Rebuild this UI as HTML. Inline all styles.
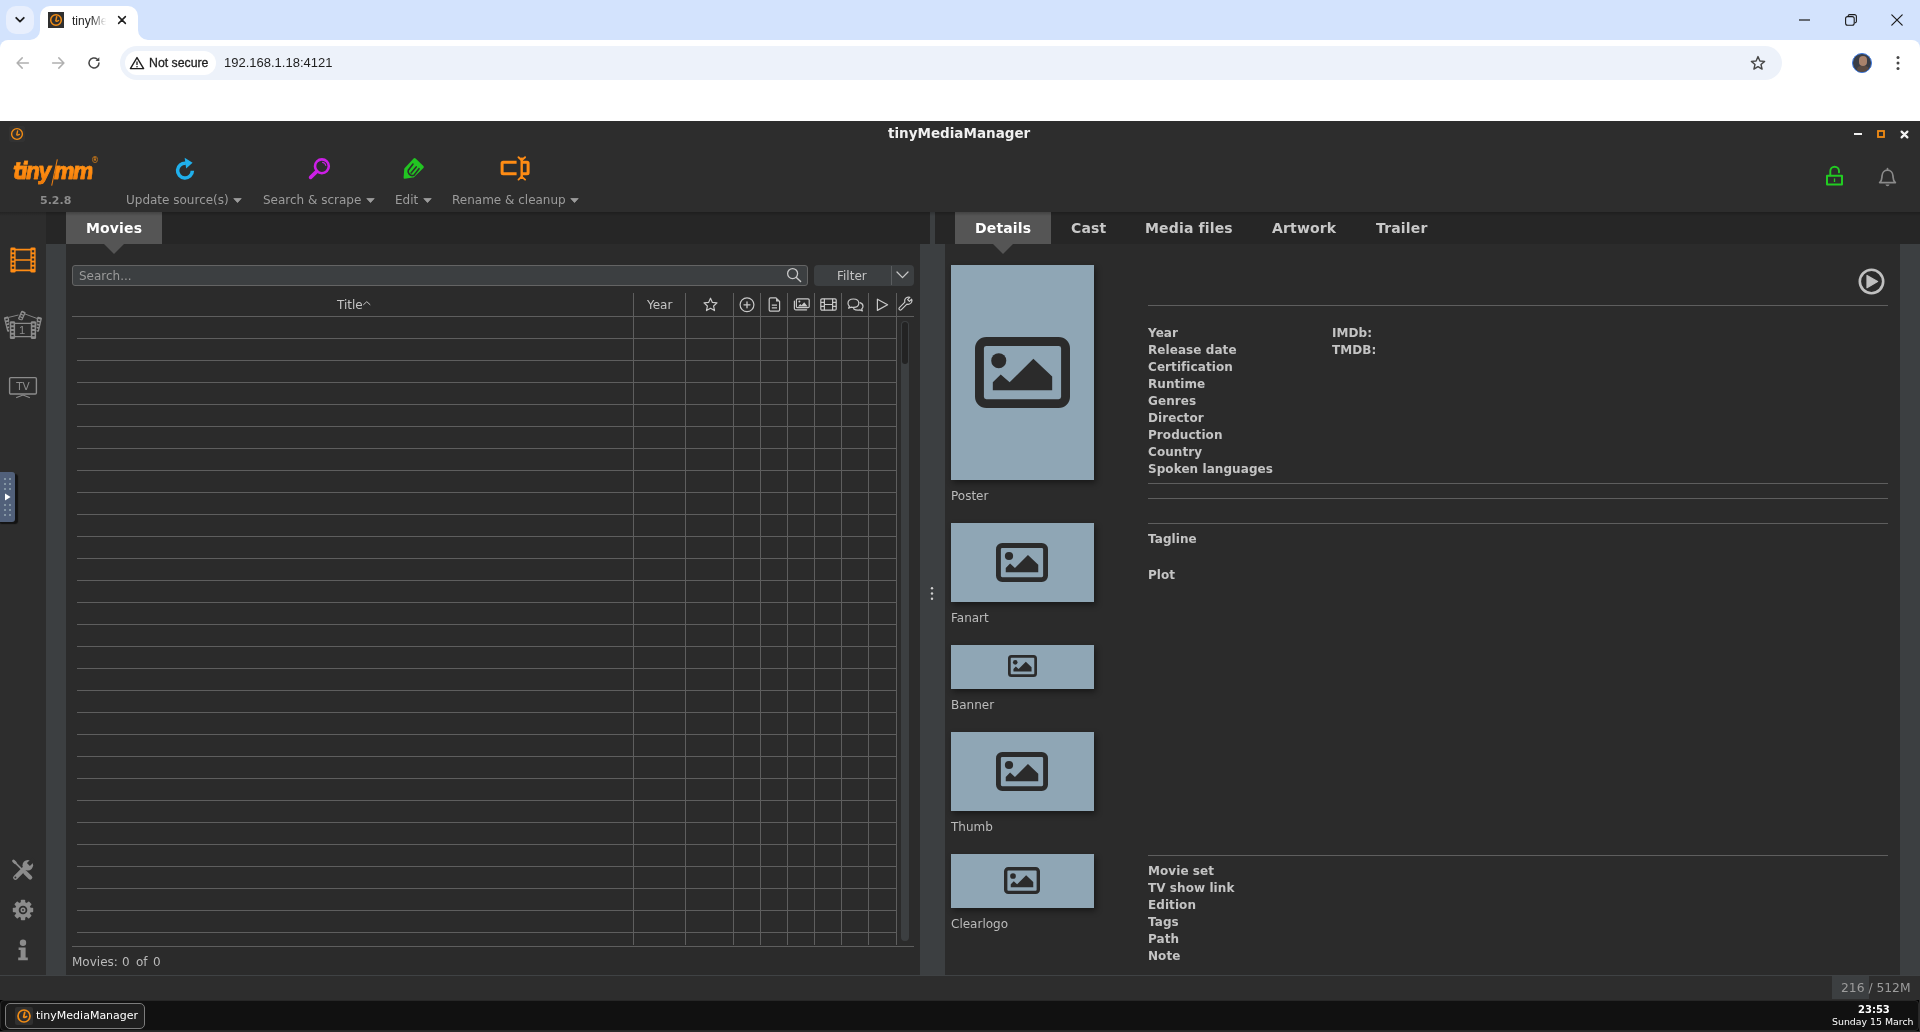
<!DOCTYPE html>
<html lang="en">
<head>
<meta charset="utf-8">
<title>tinyMediaManager</title>
<style>
*{box-sizing:border-box;margin:0;padding:0}
html,body{width:1920px;height:1032px;overflow:hidden;background:#2b2b2b}
body{position:relative;font-family:"DejaVu Sans","Liberation Sans",sans-serif;font-size:12px;color:#bbbbbb}
.abs{position:absolute}
svg{display:block;position:absolute;overflow:visible}
.t{position:absolute;white-space:pre;line-height:1}
/* ---------- browser chrome ---------- */
#tabstrip{left:0;top:0;width:1920px;height:60px;background:#d3e3fd}
#chrometool{left:0;top:40px;width:1920px;height:81px;background:#ffffff;border-radius:8px 8px 0 0}
#tabsearch{left:6px;top:6px;width:28px;height:28px;border-radius:10px;background:#e8effd}
#tab{left:40px;top:6px;width:98px;height:34px;background:#fff;border-radius:10px 10px 0 0}
#omni{left:120px;top:46px;width:1662px;height:34px;border-radius:17px;background:#edf2fa}
#chip{left:125px;top:51px;width:91px;height:24px;border-radius:12px;background:#fff}
.lib{font-family:"Liberation Sans",sans-serif}
/* ---------- app ---------- */
#apptop{left:0;top:121px;width:1920px;height:91px;background:#2d2d2d}
#tabrow{left:0;top:212px;width:1920px;height:32px;background:#262626}
#sidebar{left:0;top:212px;width:46px;height:763px;background:#2d2d2d}
#gapL{left:46px;top:244px;width:20px;height:731px;background:#3c3f41}
#gapM{left:920px;top:244px;width:25px;height:731px;background:#3c3f41}
#gapM2{left:930px;top:212px;width:5px;height:32px;background:#3c3f41}
#gapR{left:1900px;top:244px;width:20px;height:731px;background:#3c3f41}
#status{left:0;top:975px;width:1920px;height:25px;background:#2d2d2d;border-top:1px solid #3f4244}
#taskbarbg{left:0;top:1000px;width:1920px;height:32px;background:#000}
#taskbar{left:0;top:1000px;width:1919px;height:31px;background:#111111;border:1px solid #272727;border-radius:4px}
#tbr{left:1919px;top:1000px;width:1px;height:32px;background:#2b2b2b}
#tbb{left:0;top:1031px;width:1920px;height:1px;background:#2b2b2b}
.tabsel{background:#555555;height:32px;top:212px}
.tabtxt{font-weight:700;font-size:14px;color:#ffffff;letter-spacing:.14px}
.tabtxt2{font-weight:700;font-size:14px;color:#c8c8c8;letter-spacing:.16px}
.hl{position:absolute;height:1px;background:#5e5e5e}
.vl{position:absolute;width:1px;background:#5e5e5e}
.lbl{font-weight:700;font-size:12px;color:#c4c4c4;letter-spacing:.07px}
.art{position:absolute;left:951px;width:143px;background:#8fa6b5;box-shadow:2px 3px 6px rgba(0,0,0,.42)}
.tb{font-size:12px;color:#9c9c9c}
</style>
</head>
<body>
<div id="root" style="position:absolute;left:0;top:0;width:1920px;height:1032px;will-change:transform">
<!-- ======== browser chrome ======== -->
<div id="tabstrip" class="abs"></div>
<div id="chrometool" class="abs"></div>
<div id="tabsearch" class="abs"></div>
<div id="tab" class="abs"></div>
<div id="omni" class="abs"></div>
<div id="chip" class="abs"></div>
<!-- CHROME-DETAILS -->
<!-- tab flares -->
<svg style="left:30px;top:30px" width="10" height="10" viewBox="0 0 10 10"><path d="M10 0 V10 H0 A10 10 0 0 0 10 0Z" fill="#fff"/></svg>
<svg style="left:138px;top:30px" width="10" height="10" viewBox="0 0 10 10"><path d="M0 0 V10 H10 A10 10 0 0 1 0 0Z" fill="#fff"/></svg>
<!-- tab search chevron -->
<svg style="left:15px;top:16px" width="10" height="8" viewBox="0 0 10 8"><path d="M1.2 1.8 L5 5.6 L8.8 1.8" fill="none" stroke="#1f1f1f" stroke-width="1.8" stroke-linecap="round" stroke-linejoin="round"/></svg>
<!-- favicon -->
<div class="abs" style="left:48px;top:12px;width:16px;height:16px;background:#2f2f2f"></div>
<svg style="left:48px;top:12px" width="16" height="16" viewBox="0 0 16 16"><circle cx="8" cy="8" r="5.3" fill="none" stroke="#f28c14" stroke-width="1.5"/><path d="M8.7 4.7 L7.8 8.8 Q8.7 9.8 10.5 8.5" fill="none" stroke="#f28c14" stroke-width="1.5" stroke-linecap="round" stroke-linejoin="round"/></svg>
<div class="t lib" style="left:72px;top:14px;font-size:12px;line-height:14px;color:#1f1f1f;width:35px;overflow:hidden;-webkit-mask-image:linear-gradient(90deg,#000 55%,transparent 98%);mask-image:linear-gradient(90deg,#000 55%,transparent 98%)">tinyMediaManager</div>
<svg style="left:118px;top:16px" width="8" height="8" viewBox="0 0 8 8"><path d="M0.6 0.6 L7.4 7.4 M7.4 0.6 L0.6 7.4" stroke="#1f1f1f" stroke-width="1.5" stroke-linecap="round"/></svg>
<!-- window controls -->
<svg style="left:1799px;top:19px" width="11" height="2" viewBox="0 0 11 2"><rect width="11" height="1.2" y="0.4" fill="#1b1b1b"/></svg>
<svg style="left:1845px;top:14px" width="12" height="12" viewBox="0 0 12 12"><rect x="0.6" y="2.6" width="8.6" height="8.6" rx="2" fill="none" stroke="#1b1b1b" stroke-width="1.1"/><path d="M3 2.4 V2.2 A1.8 1.8 0 0 1 4.8 0.6 H9.4 A2 2 0 0 1 11.4 2.6 V7.2 A1.8 1.8 0 0 1 9.6 9" fill="none" stroke="#1b1b1b" stroke-width="1.1"/></svg>
<svg style="left:1891px;top:14px" width="12" height="12" viewBox="0 0 12 12"><path d="M0.8 0.8 L11.2 11.2 M11.2 0.8 L0.8 11.2" stroke="#1b1b1b" stroke-width="1.2" stroke-linecap="round"/></svg>
<!-- nav buttons -->
<svg style="left:16px;top:57px" width="13" height="12" viewBox="0 0 13 12"><path d="M6.2 0.9 L1.1 6 L6.2 11.1 M1.3 6 H12.4" fill="none" stroke="#b0b0b0" stroke-width="1.5" stroke-linecap="round" stroke-linejoin="round"/></svg>
<svg style="left:52px;top:57px" width="13" height="12" viewBox="0 0 13 12"><path d="M6.8 0.9 L11.9 6 L6.8 11.1 M11.7 6 H0.6" fill="none" stroke="#b0b0b0" stroke-width="1.5" stroke-linecap="round" stroke-linejoin="round"/></svg>
<svg style="left:87px;top:56px" width="14" height="14" viewBox="0 0 14 14"><path d="M12 7 A5 5 0 1 1 10.3 3.2" fill="none" stroke="#474747" stroke-width="1.5" stroke-linecap="round"/><path d="M12.3 1.2 V5 H8.5Z" fill="#474747"/></svg>
<!-- not secure chip -->
<svg style="left:129px;top:56px" width="16" height="14" viewBox="0 0 16 14"><path d="M8 1.6 L14.6 12.6 H1.4Z" fill="none" stroke="#1f1f1f" stroke-width="1.4" stroke-linejoin="round"/><path d="M8 5.6 V9" stroke="#1f1f1f" stroke-width="1.3"/><circle cx="8" cy="10.8" r="0.8" fill="#1f1f1f"/></svg>
<div class="t lib" style="left:149px;top:56px;font-size:12.3px;line-height:15px;color:#1f1f1f;-webkit-text-stroke:0.3px #1f1f1f">Not secure</div>
<div class="t lib" style="left:224px;top:55px;font-size:13px;line-height:16px;color:#1f1f1f">192.168.1.18:4121</div>
<!-- bookmark star -->
<svg style="left:1750px;top:55px" width="16" height="16" viewBox="0 0 16 16"><path d="M8 1.6 L9.9 6 L14.6 6.4 L11 9.5 L12.1 14.1 L8 11.6 L3.9 14.1 L5 9.5 L1.4 6.4 L6.1 6Z" fill="none" stroke="#474747" stroke-width="1.4" stroke-linejoin="round"/></svg>
<!-- avatar -->
<div class="abs" style="left:1852px;top:53px;width:20px;height:20px;border-radius:50%;background:#3a3d45;border:1px solid #3b78e0;overflow:hidden"><div class="abs" style="left:6px;top:2px;width:8px;height:10px;border-radius:4px;background:#a9826b"></div><div class="abs" style="left:4px;top:12px;width:12px;height:8px;border-radius:4px 4px 0 0;background:#5a4a42"></div></div>
<!-- menu dots -->
<svg style="left:1896px;top:55px" width="4" height="16" viewBox="0 0 4 16"><circle cx="2" cy="2.4" r="1.5" fill="#474747"/><circle cx="2" cy="8" r="1.5" fill="#474747"/><circle cx="2" cy="13.6" r="1.5" fill="#474747"/></svg>

<!-- ======== app ======== -->
<div id="apptop" class="abs"></div>
<div id="tabrow" class="abs"></div>
<div id="sidebar" class="abs"></div>
<div id="gapL" class="abs"></div>
<div id="gapM" class="abs"></div>
<div id="gapM2" class="abs"></div>
<div id="gapR" class="abs"></div>
<div id="status" class="abs"></div>
<div id="taskbarbg" class="abs"></div><div id="tbr" class="abs"></div><div id="tbb" class="abs"></div><div id="taskbar" class="abs"></div>
<!-- APP-TOP -->
<!-- title bar -->
<div class="abs" style="left:9px;top:126px;width:16px;height:16px;background:#323232;border-radius:2px"></div>
<svg style="left:9px;top:126px" width="16" height="16" viewBox="0 0 16 16"><circle cx="8" cy="8" r="5.4" fill="none" stroke="#f28c14" stroke-width="1.4"/><path d="M8.6 4.9 L7.8 8.7 Q8.6 9.6 10.3 8.4" fill="none" stroke="#f28c14" stroke-width="1.4" stroke-linecap="round" stroke-linejoin="round"/></svg>
<div class="t" style="left:888px;top:125px;font-size:13.5px;line-height:16px;font-weight:700;color:#f0f0f0">tinyMediaManager</div>
<svg style="left:1854px;top:133px" width="8" height="2" viewBox="0 0 8 2"><rect width="8" height="2" fill="#f0f0f0"/></svg>
<svg style="left:1877px;top:130px" width="8" height="8" viewBox="0 0 8 8"><rect x="1" y="1" width="6" height="6" fill="none" stroke="#f28c14" stroke-width="1.8"/></svg>
<svg style="left:1899.6px;top:129.6px" width="9" height="9" viewBox="0 0 9 9"><path d="M1.6 1.6 L7.4 7.4 M7.4 1.6 L1.6 7.4" stroke="#f4f4f4" stroke-width="2.2" stroke-linecap="round"/></svg>
<!-- logo -->
<div class="t" id="logo" style="left:13px;top:157px;font-family:'DejaVu Sans Condensed','DejaVu Sans',sans-serif;font-stretch:condensed;font-style:italic;font-weight:700;font-size:22.5px;line-height:28px;letter-spacing:-1.9px;color:#ff8c14;-webkit-text-stroke:0.45px #f78a12;background:linear-gradient(180deg,#ff9a1e 0%,#ff8a10 55%,#ea7608 100%);-webkit-background-clip:text;background-clip:text;-webkit-text-fill-color:transparent">tiny<span style="margin-left:4px">mm</span></div>
<div class="abs" style="left:54px;top:159px;width:1.2px;height:27px;background:#f08010;transform:rotate(12deg)"></div>
<div class="t" style="left:91px;top:156px;font-size:8px;line-height:9px;color:#f28c14">®</div>
<div class="t" style="left:40px;top:194px;font-size:11px;line-height:13px;font-weight:700;color:#8c8c8c">5.2.8</div>
<!-- toolbar icons -->
<svg style="left:173.6px;top:156.6px" width="23" height="24" viewBox="0 0 22 23"><path d="M17.6 13.2 A7.1 7.1 0 1 1 11.4 6" fill="none" stroke="#20b0ec" stroke-width="3.4"/><path d="M10.2 0.8 L17.8 5.4 L11.6 11Z" fill="#20b0ec"/></svg>
<svg style="left:308px;top:158px" width="22" height="22" viewBox="0 0 22 22"><circle cx="13.9" cy="8.3" r="6.9" fill="none" stroke="#cc1fe6" stroke-width="2.6"/><path d="M8.8 13.4 L2.6 19.4" stroke="#cc1fe6" stroke-width="3.6" stroke-linecap="round"/><path d="M14.6 4.4 A4 4 0 0 1 17.8 7.4" fill="none" stroke="#cc1fe6" stroke-width="1.1" stroke-linecap="round"/></svg>
<svg style="left:403px;top:157px" width="22" height="22" viewBox="0 0 22 22"><path d="M12.6 1.4 L20.4 9 Q21.4 10 20.4 11 L11.2 20 Q10.6 20.5 9.8 20.6 L1.8 21.7 Q0.4 21.8 0.6 20.4 L1.2 12.4 Q1.3 11.5 1.8 11 L10.6 1.4 Q11.6 0.5 12.6 1.4Z" fill="#22c522"/><path d="M10 7.1 L5.3 13.2 C4.2 15.6 7 19.6 10.9 18.3 L16 11.7 M8.1 16 L13.2 9.9" fill="none" stroke="#2d2d2d" stroke-width="1.6" stroke-linecap="round"/></svg>
<svg style="left:500px;top:156px" width="31" height="25" viewBox="0 0 31 25"><path d="M16.6 6.3 H3.1 Q2.1 6.3 2.1 7.3 V16.8 Q2.1 17.8 3.1 17.8 H16.6" fill="none" stroke="#ff8c14" stroke-width="3"/><path d="M21.2 6.3 H27.1 Q28.1 6.3 28.1 7.3 V16.8 Q28.1 17.8 27.1 17.8 H21.2" fill="none" stroke="#ff8c14" stroke-width="3"/><path d="M21.7 1.6 V23" stroke="#ff8c14" stroke-width="2.4"/><path d="M18.5 1.2 L21.7 4.2 L25.1 1.2 M18.5 23.6 L21.7 20.6 L25.1 23.6" fill="none" stroke="#ff8c14" stroke-width="1.9" stroke-linecap="round" stroke-linejoin="round"/></svg>
<!-- toolbar labels -->
<div class="t tb" style="left:126px;top:193px;line-height:14px">Update source(s)</div><svg style="left:233px;top:198px" width="9" height="5" viewBox="0 0 9 5"><path d="M0.8 0.5 H8.2 L4.5 4.6Z" fill="#9c9c9c" stroke="#9c9c9c" stroke-width="0.8" stroke-linejoin="round"/></svg>
<div class="t tb" style="left:263px;top:193px;line-height:14px">Search &amp; scrape</div><svg style="left:366px;top:198px" width="9" height="5" viewBox="0 0 9 5"><path d="M0.8 0.5 H8.2 L4.5 4.6Z" fill="#9c9c9c" stroke="#9c9c9c" stroke-width="0.8" stroke-linejoin="round"/></svg>
<div class="t tb" style="left:395px;top:193px;line-height:14px">Edit</div><svg style="left:423px;top:198px" width="9" height="5" viewBox="0 0 9 5"><path d="M0.8 0.5 H8.2 L4.5 4.6Z" fill="#9c9c9c" stroke="#9c9c9c" stroke-width="0.8" stroke-linejoin="round"/></svg>
<div class="t tb" style="left:452px;top:193px;line-height:14px">Rename &amp; cleanup</div><svg style="left:570px;top:198px" width="9" height="5" viewBox="0 0 9 5"><path d="M0.8 0.5 H8.2 L4.5 4.6Z" fill="#9c9c9c" stroke="#9c9c9c" stroke-width="0.8" stroke-linejoin="round"/></svg>
<div class="abs" style="left:0;top:212px;width:1920px;height:4px;background:linear-gradient(180deg,rgba(0,0,0,.22),rgba(0,0,0,0));z-index:5"></div>
<!-- lock + bell -->
<svg style="left:1825px;top:165px" width="19" height="22" viewBox="0 0 19 22"><rect x="2" y="10.7" width="15" height="8.8" fill="none" stroke="#22cc22" stroke-width="2" stroke-linejoin="round"/><path d="M5.3 10.4 V6.1 A4.35 4.35 0 0 1 14 6.1 V7.4" fill="none" stroke="#22cc22" stroke-width="1.9" stroke-linecap="round"/><path d="M9.5 13.4 V17" stroke="#22cc22" stroke-width="1.3"/></svg>
<svg style="left:1878px;top:167px" width="19" height="21" viewBox="0 0 19 21"><path d="M9.5 1.6 V3 M1.6 15.6 H17.4 C14.8 13.6 15.2 11.6 15 9 C14.8 5.4 12.4 3.2 9.5 3.2 C6.6 3.2 4.2 5.4 4 9 C3.8 11.6 4.2 13.6 1.6 15.6Z" fill="none" stroke="#8a8a8a" stroke-width="1.7" stroke-linejoin="round" stroke-linecap="round"/><path d="M7.4 17.6 A2.2 2.2 0 0 0 11.6 17.6Z" fill="#8a8a8a"/></svg>
<!-- tabs -->
<div class="abs tabsel" style="left:66px;width:96px"></div>
<div class="t tabtxt" style="left:86px;top:220px;line-height:17px">Movies</div>
<svg style="left:104px;top:244px" width="20" height="10" viewBox="0 0 20 10"><path d="M0 0 H20 L10 10Z" fill="#555555"/></svg>
<div class="abs tabsel" style="left:955px;width:96px"></div>
<div class="t tabtxt" style="left:975px;top:220px;line-height:17px">Details</div>
<svg style="left:993px;top:244px" width="20" height="10" viewBox="0 0 20 10"><path d="M0 0 H20 L10 10Z" fill="#555555"/></svg>
<div class="t tabtxt2" style="left:1071px;top:220px;line-height:17px">Cast</div>
<div class="t tabtxt2" style="left:1145px;top:220px;line-height:17px">Media files</div>
<div class="t tabtxt2" style="left:1272px;top:220px;line-height:17px">Artwork</div>
<div class="t tabtxt2" style="left:1376px;top:220px;line-height:17px">Trailer</div>

<!-- LEFT-PANEL -->
<div class="abs" style="left:72px;top:265px;width:736px;height:21px;background:#3c3f41;border:1px solid #646464;border-radius:3px"></div>
<div class="t" style="left:79px;top:269px;font-size:12px;line-height:15px;color:#9a9a9a">Search...</div>
<svg style="left:786px;top:267px" width="16" height="16" viewBox="0 0 16 16"><circle cx="6.6" cy="6.6" r="5" fill="none" stroke="#c8c8c8" stroke-width="1.3"/><path d="M10.4 10.4 L14.6 14.6" stroke="#c8c8c8" stroke-width="1.4" stroke-linecap="round"/></svg>
<div class="abs" style="left:814px;top:265px;width:100px;height:21px;background:#3c3f41;border-radius:4px"></div>
<div class="vl" style="left:891px;top:266px;height:19px;background:#5a5d5f"></div>
<div class="t" style="left:837px;top:269px;font-size:12px;line-height:15px;color:#c4c4c4">Filter</div>
<svg style="left:896px;top:271px" width="13" height="8" viewBox="0 0 13 8"><path d="M1 1 L6.5 6.6 L12 1" fill="none" stroke="#c8c8c8" stroke-width="1.3" stroke-linecap="round" stroke-linejoin="round"/></svg>
<!-- header -->
<div class="t" style="left:337px;top:298px;font-size:12px;line-height:15px;color:#c4c4c4">Title</div>
<svg style="left:363px;top:301px" width="8" height="4" viewBox="0 0 8 4"><path d="M0.6 3.6 L3.8 0.7 L7 3.6" fill="none" stroke="#c4c4c4" stroke-width="1" stroke-linecap="round" stroke-linejoin="round"/></svg>
<div class="t" style="left:647px;top:298px;font-size:12px;line-height:15px;color:#c4c4c4">Year</div>
<!-- HEADER-ICONS -->
<svg style="left:703px;top:297px" width="15" height="15" viewBox="0 0 15 15"><path d="M7.5 1.2 L9.4 5.4 L14 5.9 L10.6 9 L11.5 13.6 L7.5 11.3 L3.5 13.6 L4.4 9 L1 5.9 L5.6 5.4Z" fill="none" stroke="#c8c8c8" stroke-width="1.2" stroke-linejoin="round"/></svg>
<svg style="left:739px;top:297px" width="16" height="16" viewBox="0 0 16 16"><circle cx="8" cy="7.8" r="6.9" fill="none" stroke="#c8c8c8" stroke-width="1.2"/><path d="M8 4.8 V10.8 M5 7.8 H11" stroke="#c8c8c8" stroke-width="1.3" stroke-linecap="round"/></svg>
<svg style="left:768px;top:297px" width="13" height="15" viewBox="0 0 13 15"><path d="M2.6 0.8 H8 L11.6 4.4 V12.8 A1.4 1.4 0 0 1 10.2 14.2 H2.6 A1.4 1.4 0 0 1 1.2 12.8 V2.2 A1.4 1.4 0 0 1 2.6 0.8Z" fill="none" stroke="#c8c8c8" stroke-width="1.2" stroke-linejoin="round"/><path d="M8 0.8 V4.4 H11.6Z" fill="#c8c8c8"/><path d="M3.8 8.2 H9 M3.8 10.8 H9" stroke="#c8c8c8" stroke-width="1.2"/></svg>
<svg style="left:793px;top:298px" width="17" height="13" viewBox="0 0 17 13"><rect x="3.4" y="0.8" width="12.8" height="8.8" rx="1.2" fill="none" stroke="#c8c8c8" stroke-width="1.2"/><path d="M1.4 3 V10.4 A1.4 1.4 0 0 0 2.8 11.8 H13.6" fill="none" stroke="#c8c8c8" stroke-width="1.2" stroke-linecap="round"/><circle cx="6.4" cy="3.6" r="1" fill="#c8c8c8"/><path d="M5 8.4 L7.2 6 L8.6 7.2 L11.2 4.2 L14.6 8.4Z" fill="#c8c8c8"/></svg>
<svg style="left:820px;top:298px" width="17" height="13" viewBox="0 0 17 13"><rect x="0.8" y="0.8" width="15.4" height="11.4" rx="1.2" fill="none" stroke="#c8c8c8" stroke-width="1.2"/><path d="M4.4 0.8 V12.2 M12.6 0.8 V12.2 M4.4 6.5 H12.6 M0.8 4.4 H4.4 M0.8 8.4 H4.4 M12.6 4.4 H16.2 M12.6 8.4 H16.2" stroke="#c8c8c8" stroke-width="1.2"/></svg>
<svg style="left:847px;top:298px" width="17" height="14" viewBox="0 0 17 14"><path d="M6.4 1 C9.6 1 11.8 2.8 11.8 5.2 C11.8 7.6 9.6 9.4 6.4 9.4 C5.6 9.4 4.9 9.3 4.2 9.1 L1.6 10.2 L2.4 8.2 C1.5 7.4 1 6.4 1 5.2 C1 2.8 3.2 1 6.4 1Z" fill="none" stroke="#c8c8c8" stroke-width="1.2" stroke-linejoin="round"/><path d="M13 4.6 C14.8 5.2 16 6.6 16 8.2 C16 9.3 15.5 10.3 14.7 11 L15.4 13 L12.9 11.9 C12.2 12.1 11.5 12.2 10.8 12.2 C9 12.2 7.6 11.6 6.6 10.7" fill="none" stroke="#c8c8c8" stroke-width="1.2" stroke-linejoin="round" stroke-linecap="round"/></svg>
<svg style="left:876px;top:298px" width="13" height="14" viewBox="0 0 13 14"><path d="M1.4 1.2 L11.6 6.8 L1.4 12.4Z" fill="none" stroke="#c8c8c8" stroke-width="1.2" stroke-linejoin="round"/></svg>
<svg style="left:897.8px;top:296.4px" width="15" height="15" viewBox="0 0 15 15"><path d="M13.6 3.2 L11.4 5.4 L9.6 3.6 L11.8 1.4 C10.4 0.8 8.6 1.2 7.6 2.4 C6.6 3.5 6.5 4.9 6.9 6.1 L1.4 11.6 C0.8 12.2 0.8 13.1 1.4 13.6 C2 14.2 2.8 14.2 3.4 13.6 L8.9 8.1 C10.1 8.5 11.5 8.3 12.6 7.4 C13.8 6.3 14.2 4.6 13.6 3.2Z" fill="none" stroke="#c8c8c8" stroke-width="1.2" stroke-linejoin="round"/></svg>
<div class="hl" style="left:72px;top:316px;width:842px"></div>
<div class="hl" style="left:77px;top:338px;width:819px"></div><div class="hl" style="left:77px;top:360px;width:819px"></div><div class="hl" style="left:77px;top:382px;width:819px"></div><div class="hl" style="left:77px;top:404px;width:819px"></div><div class="hl" style="left:77px;top:426px;width:819px"></div><div class="hl" style="left:77px;top:448px;width:819px"></div><div class="hl" style="left:77px;top:470px;width:819px"></div><div class="hl" style="left:77px;top:492px;width:819px"></div><div class="hl" style="left:77px;top:514px;width:819px"></div><div class="hl" style="left:77px;top:536px;width:819px"></div><div class="hl" style="left:77px;top:558px;width:819px"></div><div class="hl" style="left:77px;top:580px;width:819px"></div><div class="hl" style="left:77px;top:602px;width:819px"></div><div class="hl" style="left:77px;top:624px;width:819px"></div><div class="hl" style="left:77px;top:646px;width:819px"></div><div class="hl" style="left:77px;top:668px;width:819px"></div><div class="hl" style="left:77px;top:690px;width:819px"></div><div class="hl" style="left:77px;top:712px;width:819px"></div><div class="hl" style="left:77px;top:734px;width:819px"></div><div class="hl" style="left:77px;top:756px;width:819px"></div><div class="hl" style="left:77px;top:778px;width:819px"></div><div class="hl" style="left:77px;top:800px;width:819px"></div><div class="hl" style="left:77px;top:822px;width:819px"></div><div class="hl" style="left:77px;top:844px;width:819px"></div><div class="hl" style="left:77px;top:866px;width:819px"></div><div class="hl" style="left:77px;top:888px;width:819px"></div><div class="hl" style="left:77px;top:910px;width:819px"></div><div class="hl" style="left:77px;top:932px;width:819px"></div>
<div class="vl" style="left:633px;top:293px;height:652px"></div><div class="vl" style="left:685px;top:293px;height:652px"></div><div class="vl" style="left:733px;top:293px;height:652px"></div><div class="vl" style="left:760px;top:293px;height:652px"></div><div class="vl" style="left:787px;top:293px;height:652px"></div><div class="vl" style="left:814px;top:293px;height:652px"></div><div class="vl" style="left:841px;top:293px;height:652px"></div><div class="vl" style="left:868px;top:293px;height:652px"></div><div class="vl" style="left:896px;top:293px;height:652px"></div>
<div class="hl" style="left:72px;top:946px;width:842px"></div>
<!-- scrollbar -->
<div class="abs" style="left:901px;top:321px;width:8px;height:620px;border-radius:4px;background:#3c3f41"></div>
<div class="abs" style="left:902px;top:322px;width:6px;height:42px;border-radius:3px;background:#232323"></div>
<div class="t" style="left:72px;top:955px;font-size:12px;line-height:15px;color:#bbbbbb">Movies:<span style="position:absolute;left:50px">0</span><span style="position:absolute;left:64px">of</span><span style="position:absolute;left:81px">0</span></div>

<!-- RIGHT-PANEL -->
<div class="art" style="top:265px;height:215px"></div><svg style="left:975.0px;top:337.0px" width="95" height="71" viewBox="0 0 96 72" preserveAspectRatio="none"><rect x="4.5" y="4.5" width="87" height="63" rx="7" fill="none" stroke="#2b2b2b" stroke-width="9"/><circle cx="24" cy="24" r="7.6" fill="#2b2b2b"/><path d="M18 54 V46 L26 38 L35 46 L59 22 L78 40 V54Z" fill="#2b2b2b"/></svg>
<div class="t" style="left:951px;top:489px;font-size:12px;line-height:14px;color:#bbbbbb">Poster</div>
<div class="art" style="top:523px;height:79px"></div><svg style="left:996.0px;top:542.5px" width="52" height="39" viewBox="0 0 96 72" preserveAspectRatio="none"><rect x="4.5" y="4.5" width="87" height="63" rx="7" fill="none" stroke="#2b2b2b" stroke-width="9"/><circle cx="24" cy="24" r="7.6" fill="#2b2b2b"/><path d="M18 54 V46 L26 38 L35 46 L59 22 L78 40 V54Z" fill="#2b2b2b"/></svg>
<div class="t" style="left:951px;top:611px;font-size:12px;line-height:14px;color:#bbbbbb">Fanart</div>
<div class="art" style="top:645px;height:44px"></div><svg style="left:1008.0px;top:655.0px" width="29" height="22" viewBox="0 0 96 72" preserveAspectRatio="none"><rect x="4.5" y="4.5" width="87" height="63" rx="7" fill="none" stroke="#2b2b2b" stroke-width="9"/><circle cx="24" cy="24" r="7.6" fill="#2b2b2b"/><path d="M18 54 V46 L26 38 L35 46 L59 22 L78 40 V54Z" fill="#2b2b2b"/></svg>
<div class="t" style="left:951px;top:698px;font-size:12px;line-height:14px;color:#bbbbbb">Banner</div>
<div class="art" style="top:732px;height:79px"></div><svg style="left:996.0px;top:751.5px" width="52" height="39" viewBox="0 0 96 72" preserveAspectRatio="none"><rect x="4.5" y="4.5" width="87" height="63" rx="7" fill="none" stroke="#2b2b2b" stroke-width="9"/><circle cx="24" cy="24" r="7.6" fill="#2b2b2b"/><path d="M18 54 V46 L26 38 L35 46 L59 22 L78 40 V54Z" fill="#2b2b2b"/></svg>
<div class="t" style="left:951px;top:820px;font-size:12px;line-height:14px;color:#bbbbbb">Thumb</div>
<div class="art" style="top:854px;height:54px"></div><svg style="left:1004.0px;top:867.2px" width="36" height="27" viewBox="0 0 96 72" preserveAspectRatio="none"><rect x="4.5" y="4.5" width="87" height="63" rx="7" fill="none" stroke="#2b2b2b" stroke-width="9"/><circle cx="24" cy="24" r="7.6" fill="#2b2b2b"/><path d="M18 54 V46 L26 38 L35 46 L59 22 L78 40 V54Z" fill="#2b2b2b"/></svg>
<div class="t" style="left:951px;top:917px;font-size:12px;line-height:14px;color:#bbbbbb">Clearlogo</div>
<!-- play button -->
<svg style="left:1858px;top:268px" width="27" height="27" viewBox="0 0 27 27"><circle cx="13.5" cy="13.5" r="11.7" fill="none" stroke="#c0c0c0" stroke-width="2.6"/><path d="M9 7.4 L19.6 13.6 L9 19.8Z" fill="#c0c0c0" stroke="#c0c0c0" stroke-width="1.2" stroke-linejoin="round"/></svg>
<div class="hl" style="left:1148px;top:305px;width:740px"></div>
<div class="t lbl" style="left:1148px;top:326px;line-height:14px">Year</div><div class="t lbl" style="left:1148px;top:343px;line-height:14px">Release date</div><div class="t lbl" style="left:1148px;top:360px;line-height:14px">Certification</div><div class="t lbl" style="left:1148px;top:377px;line-height:14px">Runtime</div><div class="t lbl" style="left:1148px;top:394px;line-height:14px">Genres</div><div class="t lbl" style="left:1148px;top:411px;line-height:14px">Director</div><div class="t lbl" style="left:1148px;top:428px;line-height:14px">Production</div><div class="t lbl" style="left:1148px;top:445px;line-height:14px">Country</div><div class="t lbl" style="left:1148px;top:462px;line-height:14px">Spoken languages</div>
<div class="t lbl" style="left:1332px;top:326px;line-height:14px">IMDb:</div>
<div class="t lbl" style="left:1332px;top:343px;line-height:14px">TMDB:</div>
<div class="hl" style="left:1148px;top:483px;width:740px"></div>
<div class="hl" style="left:1148px;top:498px;width:740px"></div>
<div class="hl" style="left:1148px;top:523px;width:740px"></div>
<div class="t lbl" style="left:1148px;top:532px;line-height:14px">Tagline</div>
<div class="t lbl" style="left:1148px;top:568px;line-height:14px">Plot</div>
<div class="hl" style="left:1148px;top:855px;width:740px"></div>
<div class="t lbl" style="left:1148px;top:864px;line-height:14px">Movie set</div><div class="t lbl" style="left:1148px;top:881px;line-height:14px">TV show link</div><div class="t lbl" style="left:1148px;top:898px;line-height:14px">Edition</div><div class="t lbl" style="left:1148px;top:915px;line-height:14px">Tags</div><div class="t lbl" style="left:1148px;top:932px;line-height:14px">Path</div><div class="t lbl" style="left:1148px;top:949px;line-height:14px">Note</div>
<!-- splitter dots -->
<svg style="left:930px;top:586px" width="4" height="15" viewBox="0 0 4 15"><circle cx="2" cy="2.2" r="1.2" fill="#d0d0d0"/><circle cx="2" cy="7.5" r="1.2" fill="#d0d0d0"/><circle cx="2" cy="12.8" r="1.2" fill="#d0d0d0"/></svg>

<!-- SIDEBAR -->
<svg style="left:10px;top:247px" width="26" height="26" viewBox="0 0 26 26"><rect x="0.4" y="0.6" width="5.2" height="24.8" rx="1.2" fill="#ff8c14"/><rect x="20.4" y="0.6" width="5.2" height="24.8" rx="1.2" fill="#ff8c14"/><path d="M5 2.6 H21 M5 13 H21 M5 23.4 H21" stroke="#ff8c14" stroke-width="1.6"/><rect x="1.8" y="3.2" width="2.4" height="2.2" fill="#2d2d2d"/><rect x="21.8" y="3.2" width="2.4" height="2.2" fill="#2d2d2d"/><rect x="1.8" y="7.3" width="2.4" height="2.2" fill="#2d2d2d"/><rect x="21.8" y="7.3" width="2.4" height="2.2" fill="#2d2d2d"/><rect x="1.8" y="11.4" width="2.4" height="2.2" fill="#2d2d2d"/><rect x="21.8" y="11.4" width="2.4" height="2.2" fill="#2d2d2d"/><rect x="1.8" y="15.5" width="2.4" height="2.2" fill="#2d2d2d"/><rect x="21.8" y="15.5" width="2.4" height="2.2" fill="#2d2d2d"/><rect x="1.8" y="19.6" width="2.4" height="2.2" fill="#2d2d2d"/><rect x="21.8" y="19.6" width="2.4" height="2.2" fill="#2d2d2d"/></svg>
<!-- movie set -->
<svg style="left:0px;top:300px" width="48" height="48" viewBox="0 0 48 48">
<g transform="translate(1.4 0) rotate(-14 6.4 24)"><rect x="4" y="16.6" width="4.8" height="15" rx="1" fill="#8c8c8c"/><path d="M5.3 19.4 h2.2 M5.3 22.6 h2.2 M5.3 25.8 h2.2 M5.3 29 h2.2" stroke="#2d2d2d" stroke-width="1.5"/></g>
<g transform="translate(-0.8 0) rotate(13 39 24)"><rect x="36.6" y="17" width="4.8" height="14.6" rx="1" fill="#8c8c8c"/><path d="M37.9 19.8 h2.2 M37.9 23 h2.2 M37.9 26.2 h2.2 M37.9 29.4 h2.2" stroke="#2d2d2d" stroke-width="1.5"/></g>
<g transform="rotate(24 21.9 15.6)"><rect x="19.5" y="11" width="4.8" height="9.4" rx="1" fill="#8c8c8c"/><path d="M20.8 13.4 h2.2 M20.8 16 h2.2 M20.8 18.6 h2.2" stroke="#2d2d2d" stroke-width="1.4"/></g>
<path d="M8.6 17.4 L18.4 15 M25 14 L37.4 18.6" stroke="#8c8c8c" stroke-width="0.9"/>
<rect x="9.2" y="20.4" width="27.4" height="19" fill="#2d2d2d"/>
<rect x="9.8" y="21.2" width="5.3" height="17.9" rx="1.3" fill="#8c8c8c"/><rect x="30.8" y="21.2" width="5.3" height="17.9" rx="1.3" fill="#8c8c8c"/>
<path d="M14.6 23.3 H31 M14.6 36.7 H31" stroke="#8c8c8c" stroke-width="1.3"/>
<path d="M11.3 24.4 h2.3 M11.3 28.1 h2.3 M11.3 31.8 h2.3 M11.3 35.5 h2.3 M32.3 24.4 h2.3 M32.3 28.1 h2.3 M32.3 31.8 h2.3 M32.3 35.5 h2.3" stroke="#2d2d2d" stroke-width="1.7"/>
<text x="22.2" y="34.3" font-family="Liberation Sans, sans-serif" font-size="11.2" fill="#8c8c8c" text-anchor="middle">1</text>
</svg>
<!-- tv -->
<svg style="left:8px;top:376px" width="30" height="23" viewBox="0 0 30 23"><rect x="1.6" y="1.6" width="26.8" height="16.4" rx="1.2" fill="none" stroke="#8c8c8c" stroke-width="1.4"/><path d="M8.6 21.6 L15 19 L21.4 21.6" fill="none" stroke="#8c8c8c" stroke-width="1.1" stroke-linecap="round"/><text x="15" y="14" font-family="DejaVu Sans, sans-serif" font-size="10.5" fill="#8c8c8c" text-anchor="middle">TV</text></svg>
<!-- handle -->
<div class="abs" style="left:-4px;top:472px;width:19px;height:50px;background:#51607a;border-radius:3px;box-shadow:3px 2px 1px #131313"></div>
<svg style="left:4px;top:478px" width="8" height="38" viewBox="0 0 8 38"><g fill="#8395a3"><rect x="0" y="0" width="2" height="2"/><rect x="5" y="0" width="2" height="2"/><rect x="0" y="5" width="2" height="2"/><rect x="5" y="5" width="2" height="2"/><rect x="0" y="10" width="2" height="2"/><rect x="5" y="10" width="2" height="2"/><rect x="0" y="26" width="2" height="2"/><rect x="5" y="26" width="2" height="2"/><rect x="0" y="31" width="2" height="2"/><rect x="5" y="31" width="2" height="2"/><rect x="0" y="36" width="2" height="2"/><rect x="5" y="36" width="2" height="2"/></g><path d="M1 15.4 L6.6 19 L1 22.6Z" fill="#ffffff"/></svg>
<!-- tools -->
<svg style="left:12px;top:859px" width="22" height="22" viewBox="0 0 22 22"><path d="M2.2 2.6 L10.4 10.8" stroke="#8c8c8c" stroke-width="1.7"/><path d="M1.5 1.9 L3.3 3.7" stroke="#8c8c8c" stroke-width="2.8" stroke-linecap="round"/><path d="M13.2 13.6 L18.2 18.6" stroke="#8c8c8c" stroke-width="4.2" stroke-linecap="round"/><path d="M3.4 18.6 L13.6 8.4" stroke="#8c8c8c" stroke-width="4.6" stroke-linecap="round"/><circle cx="15.8" cy="6.2" r="5.3" fill="#8c8c8c"/><path d="M16.4 5.6 L22 0" stroke="#2d2d2d" stroke-width="4.2"/><circle cx="3.4" cy="18.6" r="1" fill="#2d2d2d"/></svg>
<!-- gear -->
<svg style="left:12px;top:899px" width="22" height="22" viewBox="-11 -11 22 22"><g fill="#8c8c8c"><circle r="7.9"/><rect x="-2.2" y="-10.2" width="4.4" height="4.4" rx="0.8" transform="rotate(0)"/><rect x="-2.2" y="-10.2" width="4.4" height="4.4" rx="0.8" transform="rotate(45)"/><rect x="-2.2" y="-10.2" width="4.4" height="4.4" rx="0.8" transform="rotate(90)"/><rect x="-2.2" y="-10.2" width="4.4" height="4.4" rx="0.8" transform="rotate(135)"/><rect x="-2.2" y="-10.2" width="4.4" height="4.4" rx="0.8" transform="rotate(180)"/><rect x="-2.2" y="-10.2" width="4.4" height="4.4" rx="0.8" transform="rotate(225)"/><rect x="-2.2" y="-10.2" width="4.4" height="4.4" rx="0.8" transform="rotate(270)"/><rect x="-2.2" y="-10.2" width="4.4" height="4.4" rx="0.8" transform="rotate(315)"/></g><circle r="4.3" fill="#2d2d2d"/><circle r="2.5" fill="#8c8c8c"/><circle r="0.9" fill="#2d2d2d"/></svg>
<!-- info -->
<svg style="left:17px;top:939px" width="12" height="22" viewBox="0 0 12 22"><circle cx="6" cy="3.7" r="3.2" fill="#8c8c8c"/><path d="M1.6 8.4 H8.6 V18.6 H10.8 V21.2 H1.2 V18.6 H3.6 V11 H1.6Z" fill="#8c8c8c"/></svg>

<!-- BOTTOM -->
<div class="abs" style="left:1832px;top:976px;width:37px;height:23px;background:#3c3f41"></div>
<div class="t" style="left:1841px;top:981px;font-size:12.3px;line-height:15px;color:#9c9c9c">216 / 512M</div>
<!-- taskbar -->
<div class="abs" style="left:5px;top:1003px;width:140px;height:26px;border:1px solid #7c7c7c;border-radius:5px;background:#1f1f1f"></div>
<div class="abs" style="left:15px;top:1007px;width:18px;height:18px;background:#303030;border-radius:2px"></div>
<svg style="left:15px;top:1007px" width="18" height="18" viewBox="0 0 18 18"><circle cx="9" cy="9" r="6" fill="none" stroke="#f28c14" stroke-width="1.7"/><path d="M9.7 5.4 L8.7 9.9 Q9.6 11 11.6 9.6" fill="none" stroke="#f28c14" stroke-width="1.8" stroke-linecap="round" stroke-linejoin="round"/></svg>
<div class="t" style="left:36px;top:1009px;font-size:11px;line-height:14px;color:#ffffff">tinyMediaManager</div>
<div class="t" style="left:1858px;top:1004px;font-size:10px;line-height:12px;font-weight:700;color:#ffffff">23:53</div>
<div class="t" style="left:1832px;top:1016px;font-size:9.4px;line-height:11px;color:#ffffff">Sunday 15 March</div>

</div>
</body>
</html>
